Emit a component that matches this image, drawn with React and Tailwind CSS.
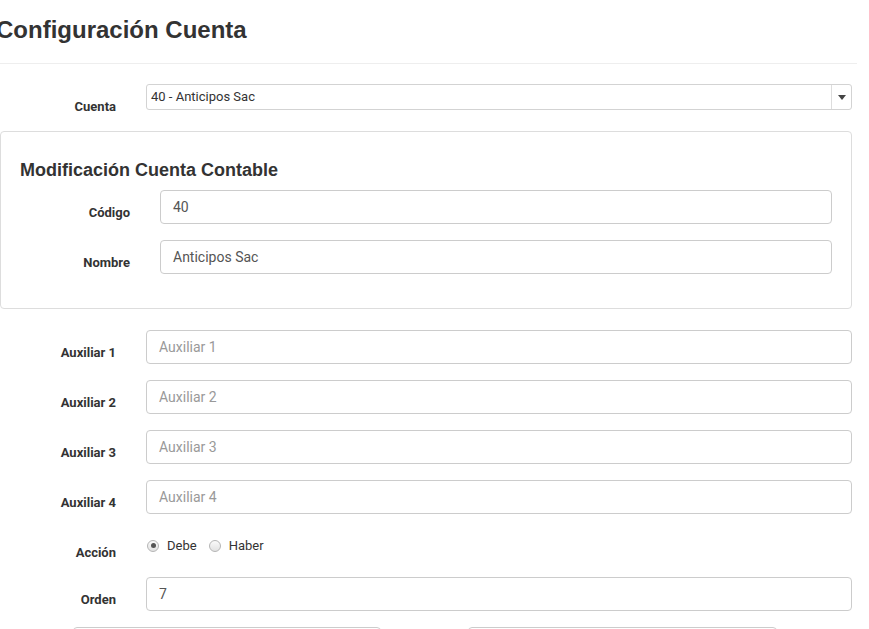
import React from "react";

const Label = ({ children, w }) => (
  <label className={`${w} shrink-0 pr-[30px] pt-[16px] text-right text-[13px] leading-[14px] font-bold text-[#333]`}>
    {children}
  </label>
);

const TextInput = ({ value, placeholder }) => (
  <div className="flex h-[34px] flex-1 items-center rounded-[4px] border border-[#ccc] bg-white px-3 text-[14px] text-[#555]">
    {value ? <span>{value}</span> : <span className="text-[#999]">{placeholder}</span>}
  </div>
);

const Radio = ({ checked, label }) => (
  <span className="inline-flex items-center gap-[8px]">
    <span className="flex h-[12px] w-[12px] items-center justify-center rounded-full border border-[#b5b5b5] bg-gradient-to-b from-[#fafafa] to-[#e2e2e2]">
      {checked && <span className="h-[5px] w-[5px] rounded-full bg-[#555]" />}
    </span>
    <span className="text-[13px] text-[#333]">{label}</span>
  </span>
);

export default function App() {
  const auxiliares = ["Auxiliar 1", "Auxiliar 2", "Auxiliar 3", "Auxiliar 4"];

  return (
    <div className="h-[629px] w-[869px] overflow-hidden bg-white font-['Roboto',sans-serif]">
      <h3 className="ml-[-4px] pt-[16px] font-['Liberation_Sans',Arial,sans-serif] text-[24px] leading-[28px] font-bold text-[#333]">
        Configuración Cuenta
      </h3>
      <div className="mt-[19px] h-px w-[857px] bg-[#eee]" />

      <div className="w-[852px]">
        <div className="mt-[20px] flex h-[26px] items-start">
          <Label w="w-[146px]">Cuenta</Label>
          <div className="flex h-[26px] flex-1 items-stretch rounded-[3px] border border-[#d3d3d3] bg-white">
            <span className="flex flex-1 items-center pl-[4px] text-[13px] text-[#333]">40 - Anticipos Sac</span>
            <span className="flex w-[20px] items-center justify-center border-l border-[#ddd]">
              <span className="h-0 w-0 border-x-[4px] border-t-[5px] border-x-transparent border-t-[#444]" />
            </span>
          </div>
        </div>

        <div className="mt-[21px] h-[178px] w-[852px] rounded-[4px] border border-[#ddd] bg-white">
          <h4 className="pl-[19px] pt-[27px] font-['Liberation_Sans',Arial,sans-serif] text-[18px] leading-[22px] font-bold text-[#333]">
            Modificación Cuenta Contable
          </h4>
          <div className="mt-[9px] flex pr-[19px]">
            <Label w="w-[159px]">Código</Label>
            <TextInput value="40" />
          </div>
          <div className="mt-[16px] flex pr-[19px]">
            <Label w="w-[159px]">Nombre</Label>
            <TextInput value="Anticipos Sac" />
          </div>
        </div>

        <div className="mt-[21px] flex flex-col gap-[16px]">
          {auxiliares.map((a) => (
            <div key={a} className="flex">
              <Label w="w-[146px]">{a}</Label>
              <TextInput placeholder={a} />
            </div>
          ))}
          <div className="flex h-[31px]">
            <Label w="w-[146px]">Acción</Label>
            <div className="flex items-start gap-[12px] pl-[1px] pt-[6px]">
              <Radio checked label="Debe" />
              <Radio label="Haber" />
            </div>
          </div>
          <div className="flex">
            <Label w="w-[146px]">Orden</Label>
            <TextInput value="7" />
          </div>
        </div>

        <div className="mt-[16px] flex">
          <div className="ml-[73px] h-[30px] w-[308px] rounded-[4px] border border-[#ccc]" />
          <div className="ml-[87px] h-[30px] w-[309px] rounded-[4px] border border-[#ccc]" />
        </div>
      </div>
    </div>
  );
}
